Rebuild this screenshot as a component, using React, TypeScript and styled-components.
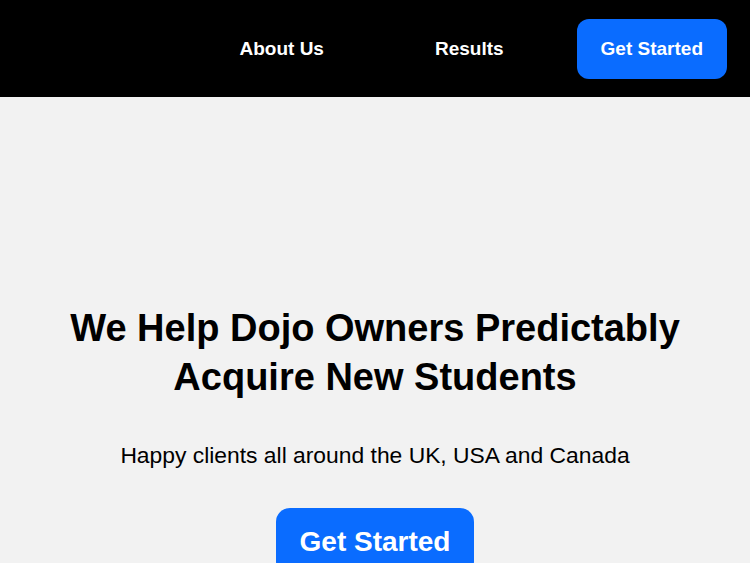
import React from "react";
import styled, { createGlobalStyle } from "styled-components";

const Global = createGlobalStyle`
  html, body { margin: 0; padding: 0; }
  body {
    background: #f2f2f2;
    font-family: "Liberation Sans", Arial, sans-serif;
    color: #000;
  }
  * { box-sizing: border-box; }
`;

const Header = styled.header`
  height: 97px;
  background: #000;
  display: flex;
  align-items: center;
  justify-content: flex-end;
  padding-right: 23px;
`;

const NavLink = styled.a<{ $gap: number }>`
  color: #fff;
  font-size: 19px;
  font-weight: 700;
  text-decoration: none;
  margin-right: ${(p) => p.$gap}px;
  line-height: 1;
`;

const Button = styled.a<{ $size: number; $padX: number; $height: number; $radius: number }>`
  display: inline-flex;
  align-items: center;
  justify-content: center;
  background: #0a6cff;
  color: #fff;
  font-weight: 700;
  font-size: ${(p) => p.$size}px;
  padding: 0 ${(p) => p.$padX}px;
  height: ${(p) => p.$height}px;
  border-radius: ${(p) => p.$radius}px;
  text-decoration: none;
`;

const Hero = styled.section`
  display: flex;
  flex-direction: column;
  align-items: center;
  text-align: center;
  padding-top: 207px;
`;

const Title = styled.h1`
  margin: 0;
  font-size: 38px;
  font-weight: 700;
  line-height: 49px;
`;

const Subtitle = styled.p`
  margin: 41px 0 0;
  font-size: 22.85px;
  line-height: 25px;
`;

const HeroActions = styled.div`
  margin-top: 40px;
`;

export default function App() {
  return (
    <>
      <Global />
      <Header>
        <NavLink href="#" $gap={111}>About Us</NavLink>
        <NavLink href="#" $gap={73}>Results</NavLink>
        <Button href="#" $size={19} $padX={24} $height={60} $radius={12}>
          Get Started
        </Button>
      </Header>
      <Hero>
        <Title>
          We Help Dojo Owners Predictably
          <br />
          Acquire New Students
        </Title>
        <Subtitle>Happy clients all around the UK, USA and Canada</Subtitle>
        <HeroActions>
          <Button href="#" $size={28} $padX={24} $height={68} $radius={14}>
            Get Started
          </Button>
        </HeroActions>
      </Hero>
    </>
  );
}
